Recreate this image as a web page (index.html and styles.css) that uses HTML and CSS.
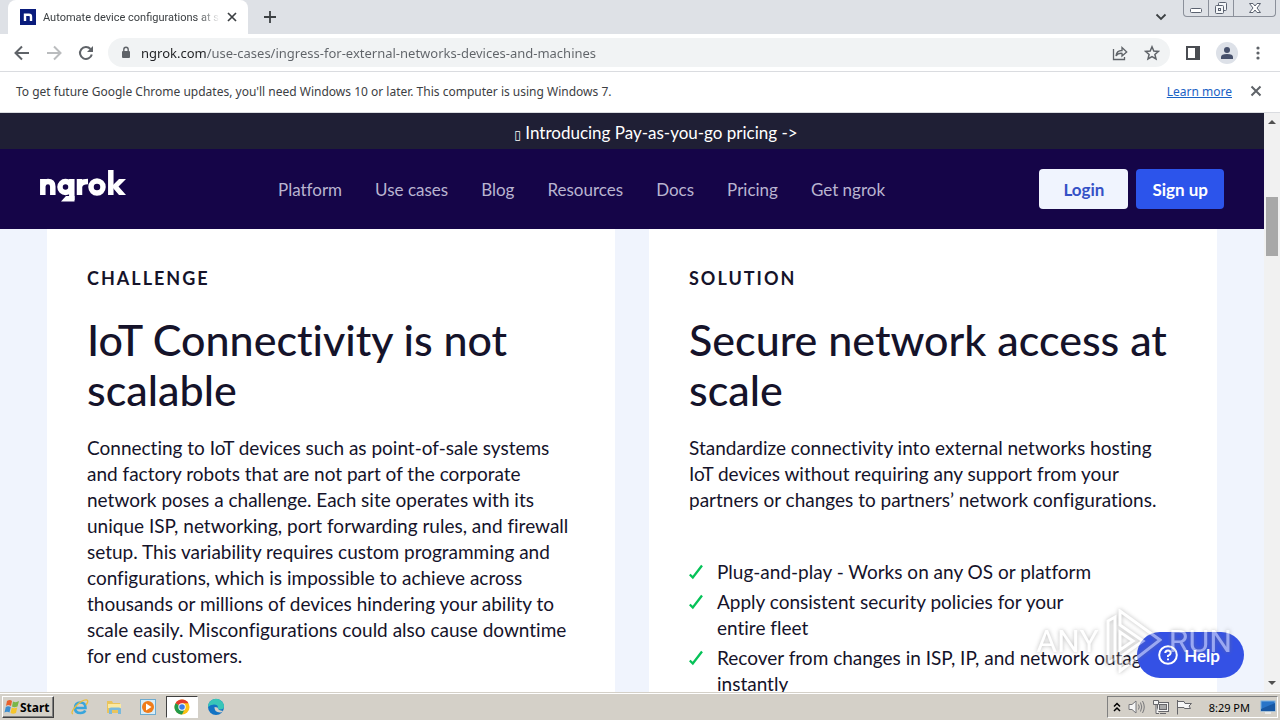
FILE: index.html
```
<!DOCTYPE html>
<html lang="en">
<head>
    <meta charset="UTF-8">
    <meta name="viewport" content="width=device-width, initial-scale=1.0">
    <title>Automate device configurations at scale</title>
    <link rel="stylesheet" href="styles.css">
</head>
<body>
    <!-- Browser tabs -->
    <div class="tab-strip">
        <div class="tab">
            <svg class="favicon" width="16" height="16" viewBox="0 0 16 16">
                <rect width="16" height="16" fill="#0a1c7c"/>
                <path d="M5 12V4.500M5 5.700H9Q11 5.700 11 7.700V12" fill="none" stroke="#fff" stroke-width="2.400"/>
            </svg>
            <span class="tab-title">Automate device configurations at scale</span>
            <button class="icon-button" aria-label="Close tab">
                <svg width="10" height="10" viewBox="0 0 10 10"><path d="M1 1L9 9M9 1L1 9" stroke="#3c4043" stroke-width="1.700"/></svg>
            </button>
        </div>
        <button class="icon-button new-tab" aria-label="New tab">
            <svg width="14" height="14" viewBox="0 0 14 14"><path d="M7 1V13M1 7H13" stroke="#3c4043" stroke-width="1.800"/></svg>
        </button>
        <button class="icon-button tab-search" aria-label="Search tabs">
            <svg width="12" height="8" viewBox="0 0 12 8"><path d="M1.500 1.500L6 6L10.500 1.500" fill="none" stroke="#3c4043" stroke-width="1.800"/></svg>
        </button>
        <div class="window-buttons">
            <button aria-label="Minimize">
                <svg width="14" height="14" viewBox="0 0 14 14"><rect x="1.500" y="7.500" width="11" height="4" rx="1" fill="#fff" stroke="#5b6270"/></svg>
            </button>
            <button aria-label="Restore">
                <svg width="14" height="14" viewBox="0 0 14 14" fill="#f4f6f8" stroke="#5b6270"><rect x="4.500" y="1.500" width="8" height="8" rx="1"/><rect x="1.500" y="4.500" width="8" height="8" rx="1"/><rect x="4.500" y="7.500" width="2" height="2"/></svg>
            </button>
            <button class="window-close" aria-label="Close">
                <svg width="14" height="14" viewBox="0 0 14 14"><path d="M1.500 2.500H5L7 5L9 2.500H12.500L9 7L12.500 11.500H9L7 9L5 11.500H1.500L5 7Z" fill="#fff" stroke="#5b6270"/></svg>
            </button>
        </div>
    </div>

    <!-- Address bar -->
    <div class="toolbar">
        <button class="icon-button" aria-label="Back">
            <svg width="16" height="16" viewBox="0 0 16 16" fill="none" stroke="#5f6368" stroke-width="2"><path d="M15 8H2M8 1.500L1.500 8L8 14.500"/></svg>
        </button>
        <button class="icon-button" aria-label="Forward">
            <svg width="16" height="16" viewBox="0 0 16 16" fill="none" stroke="#babcbe" stroke-width="2"><path d="M1 8H14M8 1.500L14.500 8L8 14.500"/></svg>
        </button>
        <button class="icon-button" aria-label="Reload">
            <svg width="16" height="16" viewBox="0 0 16 16"><path d="M13.800 9.500A6 6 0 1 1 12.500 4" fill="none" stroke="#5f6368" stroke-width="2"/><path d="M15 1V7H9Z" fill="#5f6368"/></svg>
        </button>
        <div class="omnibox">
            <svg width="10" height="13" viewBox="0 0 10 13"><rect x="1" y="5" width="8" height="7" rx="1" fill="#5f6368"/><path d="M2.800 5.500V3.500A2.200 2.200 0 0 1 7.200 3.500V5.500" fill="none" stroke="#5f6368" stroke-width="1.400"/></svg>
            <input class="url" type="text" aria-label="Address" value="ngrok.com/use-cases/ingress-for-external-networks-devices-and-machines">
            <button class="icon-button" aria-label="Share">
                <svg width="16" height="16" viewBox="0 0 16 16" fill="none" stroke="#5f6368" stroke-width="1.300"><path d="M1.500 4V14.500H12.500V12"/><path d="M4 11Q4.500 5.500 10 5.500V2.500L14.700 7L10 11V8.300Q6 8 4 11Z"/></svg>
            </button>
            <button class="icon-button" aria-label="Bookmark">
                <svg width="16" height="16" viewBox="0 0 16 16"><path d="M8 1.800L9.800 6L14.400 6.400L10.900 9.400L12 13.900L8 11.500L4 13.900L5.100 9.400L1.600 6.400L6.200 6Z" fill="none" stroke="#5f6368" stroke-width="1.500"/></svg>
            </button>
        </div>
        <button class="icon-button" aria-label="Side panel">
            <svg width="14" height="14" viewBox="0 0 14 14"><path d="M0 0H14V14H0ZM2 2V12H9V2Z" fill="#4a4d52" fill-rule="evenodd"/></svg>
        </button>
        <button class="icon-button" aria-label="Profile">
            <svg width="22" height="22" viewBox="0 0 22 22"><circle cx="11" cy="11" r="11" fill="#dde1e8"/><circle cx="11" cy="8" r="3" fill="#46506b"/><path d="M5 17V15Q5 12 11 12T17 15V17Z" fill="#46506b"/></svg>
        </button>
        <button class="icon-button menu" aria-label="Menu">
            <svg width="4" height="14" viewBox="0 0 4 14" fill="#5f6368"><circle cx="2" cy="2" r="1.600"/><circle cx="2" cy="7" r="1.600"/><circle cx="2" cy="12" r="1.600"/></svg>
        </button>
    </div>

    <div class="infobar">
        <span>To get future Google Chrome updates, you'll need Windows 10 or later. This computer is using Windows 7.</span>
        <a href="#">Learn more</a>
        <button class="icon-button" aria-label="Dismiss">
            <svg width="12" height="12" viewBox="0 0 12 12"><path d="M1.500 1.500L10.500 10.500M10.500 1.500L1.500 10.500" stroke="#5f6368" stroke-width="2"/></svg>
        </button>
    </div>

    <!-- Page -->
    <div class="viewport">
        <div class="page">
            <a class="banner" href="#"><span class="symbol">&#x25AF;</span> Introducing Pay-as-you-go pricing -&gt;</a>
            <header class="site-header">
                <a class="logo" href="#" aria-label="ngrok home">
                    <svg width="86" height="34" viewBox="0 0 86 34" fill="none" stroke="#fff" stroke-width="5.500">
                        <path d="M2.800 26V10M2.800 17Q3.500 12.500 8 12.500Q12.800 12.500 12.800 17.500V26"/>
                        <circle cx="25.500" cy="18" r="5.500"/>
                        <path d="M31.800 10V31"/>
                        <path d="M21 32.500L26 27H34.500V32.500Z" fill="#fff" stroke="none"/>
                        <path d="M39.500 26V10M39.500 18Q40 12.500 48 12.500"/>
                        <circle cx="57" cy="18" r="6"/>
                        <path d="M70.800 26V1"/>
                        <path d="M73 16L79 10H86L78.500 17.500L86 26H79L73 19Z" fill="#fff" stroke="none"/>
                    </svg>
                </a>
                <nav class="nav">
                    <a href="#">Platform</a>
                    <a href="#">Use cases</a>
                    <a href="#">Blog</a>
                    <a href="#">Resources</a>
                    <a href="#">Docs</a>
                    <a href="#">Pricing</a>
                    <a href="#">Get ngrok</a>
                </nav>
                <div class="actions">
                    <button class="login">Login</button>
                    <button class="signup">Sign up</button>
                </div>
            </header>
            <main class="cards">
                <section class="card">
                    <h3>CHALLENGE</h3>
                    <h2>IoT Connectivity is not<br>scalable</h2>
                    <p>Connecting to IoT devices such as point-of-sale systems<br>and factory robots that are not part of the corporate<br>network poses a challenge. Each site operates with its<br>unique ISP, networking, port forwarding rules, and firewall<br>setup. This variability requires custom programming and<br>configurations, which is impossible to achieve across<br>thousands or millions of devices hindering your ability to<br>scale easily. Misconfigurations could also cause downtime<br>for end customers.</p>
                </section>
                <section class="card">
                    <h3>SOLUTION</h3>
                    <h2>Secure network access at<br>scale</h2>
                    <p>Standardize connectivity into external networks hosting<br>IoT devices without requiring any support from your<br>partners or changes to partners’ network configurations.</p>
                    <ul class="checks">
                        <li><svg width="16" height="18" viewBox="0 0 16 18"><path d="M.8 11.500L3.800 14.500L13 2.500" fill="none" stroke="#06c258" stroke-width="2.300"/></svg>Plug-and-play - Works on any OS or platform</li>
                        <li><svg width="16" height="18" viewBox="0 0 16 18"><path d="M.8 11.500L3.800 14.500L13 2.500" fill="none" stroke="#06c258" stroke-width="2.300"/></svg>Apply consistent security policies for your<br>entire fleet</li>
                        <li><svg width="16" height="18" viewBox="0 0 16 18"><path d="M.8 11.500L3.800 14.500L13 2.500" fill="none" stroke="#06c258" stroke-width="2.300"/></svg>Recover from changes in ISP, IP, and network outages<br>instantly</li>
                    </ul>
                </section>
            </main>
            <button class="help">
                <svg width="20" height="20" viewBox="0 0 20 20" fill="none" stroke="#fff" stroke-width="2"><circle cx="10" cy="10" r="8.800"/><path d="M7.300 8Q7.300 5.500 10 5.500T12.700 8Q12.700 9.500 10 10.800V12M10 13.500V15.300"/></svg>
                Help
            </button>
        </div>
        <div class="scrollbar">
            <svg width="8" height="5" viewBox="0 0 8 5"><path d="M0 5L4 1L8 5Z" fill="#505050"/></svg>
            <div class="track"><div class="thumb"></div></div>
            <svg width="8" height="5" viewBox="0 0 8 5"><path d="M0 0L4 4L8 0Z" fill="#505050"/></svg>
        </div>
        <div class="watermark">
            <span>ANY</span>
            <svg width="56" height="64" viewBox="0 0 56 64" fill="none" stroke="#fff" stroke-width="3"><path d="M2 12L9 8V50L2 54Z"/><path d="M14 2L54 31L14 62V48L37 32L14 16Z"/><path d="M14 23L27 32L14 41Z"/></svg>
            <span>RUN</span>
        </div>
    </div>

    <!-- Windows taskbar -->
    <div class="taskbar">
        <button class="start">
            <svg width="16" height="16" viewBox="0 0 16 16"><path d="M3 2Q6 0 8 2L7 7Q4 5 2 7Z" fill="#e8602c"/><path d="M9 2.500Q12 4 15 2L13.500 7.500Q10 9 8 7.500Z" fill="#7ab648"/><path d="M1.800 8Q4 6.500 6.800 8L5.500 13.500Q3 12 .5 13.500Z" fill="#3c8ed0"/><path d="M7.800 8.500Q10 10 13.200 8.500L12 14Q9 15.500 6.500 14Z" fill="#f6c52c"/></svg>
            Start
        </button>
        <div class="quick-launch">
            <button aria-label="Internet Explorer">
                <svg width="18" height="18" viewBox="0 0 18 18" fill="none"><path d="M4 10H14.500Q14.500 4.500 9.500 4.500Q4 4.500 4 10Q4 15 9.500 15Q13 15 14.300 12.500" stroke="#38a5dc" stroke-width="2.600"/><path d="M2 16Q-1 15 5 8Q12 1 16 2Q18 3 15 7" stroke="#e9bd3c" stroke-width="1.300"/></svg>
            </button>
            <button aria-label="Explorer">
                <svg width="18" height="18" viewBox="0 0 18 18"><path d="M2 3H7L8 5H15V15H2Z" fill="#e9c45c"/><path d="M3 6H16V10H3Z" fill="#fbe9a0"/><path d="M4 16V11Q4 9.500 6 9.500H14Q16 9.500 16 11V16H13V12H7V16Z" fill="#79b9dc"/></svg>
            </button>
            <button aria-label="Media Player">
                <svg width="18" height="18" viewBox="0 0 18 18"><rect x="1.500" y="1.500" width="15" height="15" fill="#d8edf8" stroke="#6cabd0"/><circle cx="9" cy="9" r="6" fill="#f07c1a"/><path d="M7 5.500L12.500 9L7 12.500Z" fill="#fff"/></svg>
            </button>
            <button class="active" aria-label="Chrome">
                <svg width="16" height="16" viewBox="0 0 16 16"><circle cx="8" cy="8" r="7.500" fill="#fbc116"/><path d="M8 8L1.500 4.250A7.500 7.500 0 0 1 14.500 4.250H8Z" fill="#e33b2e"/><path d="M8 8L1.500 4.250A7.500 7.500 0 0 0 8 15.500L11 9.500Z" fill="#229a4b"/><circle cx="8" cy="8" r="3.700" fill="#fff"/><circle cx="8" cy="8" r="2.800" fill="#3a7de8"/></svg>
            </button>
            <button aria-label="Edge">
                <svg width="18" height="18" viewBox="0 0 18 18"><circle cx="9" cy="9" r="8" fill="#1273c4"/><path d="M1 9A8 8 0 0 1 17 8.500Q17 11.500 13 11.500Q10.500 11.500 11 9.500Q11 6.500 7 6.500Q3 6.500 1 9Z" fill="#38c6b8"/><path d="M7.500 9Q7 14 13 14.500Q15 14.500 16 13Q11 12.500 10.500 9.500Z" fill="#d4d0c8"/></svg>
            </button>
        </div>
        <div class="tray">
            <svg width="8" height="10" viewBox="0 0 8 10" fill="none" stroke="#000" stroke-width="1.500"><path d="M1 4.500L4 1.500L7 4.500M1 9L4 6L7 9"/></svg>
            <svg width="18" height="16" viewBox="0 0 18 16" fill="none" stroke="#77777a"><path d="M1 5.500H4L8 2V14L4 10.500H1Z" fill="#f5f5f5"/><path d="M10.500 5.500Q12 8 10.500 10.500M12.500 3.500Q15 8 12.500 12.500M14.500 2Q18 8 14.500 14"/></svg>
            <svg width="16" height="16" viewBox="0 0 16 16" fill="#f5f5f5" stroke="#66666a"><rect x="4.500" y="3.500" width="11" height="9"/><rect x="6.500" y="5.500" width="7" height="5" fill="#a9a9aa"/><path d="M7 14.500H13M.5 1.500H5.500V5.500H.5ZM3 6V14.500H6"/></svg>
            <svg width="17" height="16" viewBox="0 0 17 16"><path d="M1.500 1V15.500M2 2.500H8L9 4.500H15.500L13 7L14.500 9.500H8.500L8 8.500H2" fill="#f7f7f7" stroke="#66666a"/></svg>
            <span class="clock">8:29 PM</span>
            <svg width="16" height="14" viewBox="0 0 16 14"><rect x="1" y="1" width="14" height="10" fill="#2874c8" stroke="#7ab0e0"/><path d="M1 9L15 3V11H1Z" fill="#1858a4"/><path d="M5 13H11" stroke="#e8e8e8" stroke-width="2"/></svg>
        </div>
    </div>
</body>
</html>
```
FILE: styles.css
```
* {
    box-sizing: border-box;
}
body {
    margin: 0;
    height: 100vh;
    display: flex;
    flex-direction: column;
    overflow: hidden;
    font-family: "DejaVu Sans", sans-serif;
    font-size: 12px;
    background-color: #fff;
}
button {
    font-family: inherit;
    padding: 0;
    border: none;
    background: none;
    cursor: pointer;
}
svg {
    flex-shrink: 0;
}
.icon-button {
    display: flex;
    align-items: center;
    justify-content: center;
}

/* Tabs */
.tab-strip {
    display: flex;
    height: 34px;
    padding-left: 8px;
    background-color: #dee1e6;
}
.tab {
    display: flex;
    align-items: center;
    gap: 7px;
    width: 240px;
    padding: 0 11px 0 12px;
    background-color: #fff;
    border-radius: 8px 8px 0 0;
}
.tab-title {
    flex: 1;
    overflow: hidden;
    white-space: nowrap;
    font-family: Roboto, sans-serif;
    font-size: 11px;
    color: #3c4043;
    mask-image: linear-gradient(to right, #000 88%, transparent);
}
.new-tab {
    width: 44px;
}
.tab-search {
    width: 28px;
    margin-left: auto;
}
.window-buttons {
    display: flex;
    height: 17px;
    margin: 0 4px 0 8px;
    border: 1px solid #8b909a;
    border-top: none;
    border-radius: 0 0 4px 4px;
}
.window-buttons button {
    display: flex;
    align-items: center;
    justify-content: center;
    width: 25px;
    border-right: 1px solid #8b909a;
}
.window-buttons .window-close {
    width: 41px;
    border-right: none;
}

/* Toolbar */
.toolbar {
    display: flex;
    align-items: center;
    gap: 16px;
    height: 38px;
    padding: 0 20px 0 14px;
    border-bottom: 1px solid #dadce0;
}
.omnibox {
    display: flex;
    align-items: center;
    gap: 16px;
    flex: 1;
    height: 29px;
    margin-left: -2px;
    padding: 0 10px 0 13px;
    background-color: #f1f3f4;
    border-radius: 15px;
}
.url {
    flex: 1;
    min-width: 0;
    margin-left: -6px;
    padding: 0;
    border: none;
    outline: none;
    font-family: "Noto Sans", sans-serif;
    font-size: 13px;
    background: linear-gradient(to right, #202124 65px, #5f6368 65px);
    background-clip: text;
    -webkit-text-fill-color: transparent;
}
.toolbar .icon-button + .icon-button + .menu {
    margin-left: 2px;
}

.infobar {
    display: flex;
    align-items: center;
    height: 41px;
    padding: 0 18px 2px 16px;
    border-bottom: 1px solid #dadce0;
    font-family: "Noto Sans", sans-serif;
    color: #3c4043;
}
.infobar a {
    margin: 0 18px 0 auto;
    color: #1a62c5;
}

/* Page */
.viewport {
    position: relative;
    display: flex;
    flex: 1;
    min-height: 0;
}
.page {
    flex: 1;
    min-width: 0;
    overflow: hidden;
    font-family: Lato, sans-serif;
    font-variant-ligatures: none;
    color: #15132a;
    background-color: #f0f4fd;
}
.banner {
    display: block;
    height: 36px;
    padding-left: 48px;
    line-height: 40px;
    font-size: 17px;
    text-align: center;
    text-decoration: none;
    color: #fff;
    background-color: #1f1f35;
}
.banner .symbol {
    font-family: "DejaVu Sans", sans-serif;
    font-size: 12px;
}
.site-header {
    display: flex;
    align-items: center;
    height: 80px;
    padding: 0 40px;
    background-color: #150548;
}
.logo {
    display: flex;
    width: 238px;
    padding-bottom: 6px;
}
.nav {
    display: flex;
    gap: 33px;
}
.nav a {
    font-size: 17px;
    text-decoration: none;
    color: #b9b4d0;
}
.actions {
    display: flex;
    gap: 8px;
    margin-left: auto;
}
.actions button {
    height: 40px;
    border-radius: 4px;
    font-size: 17px;
    font-weight: bold;
}
.actions .login {
    padding: 0 24px;
    color: #3451c6;
    background-color: #f0f4fe;
}
.actions .signup {
    padding: 0 16px;
    color: #fff;
    background-color: #2c54eb;
}
.cards {
    display: flex;
    gap: 34px;
    padding: 0 47px;
}
.card {
    flex: 1;
    min-height: 500px;
    padding: 36px 40px;
    background-color: #fff;
    white-space: nowrap;
}
.card h3 {
    margin: 0;
    font-size: 18px;
    line-height: 26px;
    letter-spacing: 2px;
}
.card h2 {
    margin: 24px 0 20px;
    font-size: 43px;
    line-height: 50px;
    font-weight: 500;
}
.card p {
    margin: 0;
    font-size: 19px;
    line-height: 26px;
}
.checks {
    margin: 46px 0 0;
    padding: 0;
    list-style: none;
    font-size: 19px;
    line-height: 26px;
}
.checks li {
    display: flex;
    gap: 12px;
    margin-bottom: 4px;
}
.checks svg {
    margin-top: 4px;
}
.help {
    position: absolute;
    right: 36px;
    bottom: 14px;
    display: flex;
    align-items: center;
    gap: 6px;
    height: 46px;
    padding: 0 24px 0 21px;
    border-radius: 23px;
    font-size: 17px;
    font-weight: bold;
    color: #fff;
    background-color: #3451e5;
}
.scrollbar {
    display: flex;
    flex-direction: column;
    align-items: center;
    width: 16px;
    padding: 6px 0;
    background-color: #f1f1f1;
}
.track {
    flex: 1;
    width: 12px;
    padding-top: 73px;
}
.thumb {
    height: 59px;
    background-color: #a8a8a8;
}
.watermark {
    position: absolute;
    right: 48px;
    bottom: 19px;
    display: flex;
    align-items: center;
    gap: 7px;
    font-family: "Liberation Sans Narrow", Roboto, sans-serif;
    font-size: 32px;
    color: #fff;
    opacity: 0.5;
    filter: drop-shadow(0 0 2px #777);
    pointer-events: none;
}

/* Taskbar */
.taskbar {
    display: flex;
    align-items: center;
    height: 28px;
    padding: 1px 2px 0;
    border-top: 1px solid #d4d0c8;
    box-shadow: inset 0 1px #fff;
    background-color: #d4d0c8;
}
.start {
    display: flex;
    align-items: center;
    height: 22px;
    padding: 0 3px 0 1px;
    border: 1px solid;
    border-color: #fff #404040 #404040 #fff;
    box-shadow: inset -1px -1px #808080;
    font-family: "Noto Sans", sans-serif;
    font-size: 12px;
    font-weight: bold;
}
.quick-launch {
    display: flex;
    gap: 2px;
    margin-left: 10px;
}
.quick-launch button {
    display: flex;
    align-items: center;
    justify-content: center;
    width: 32px;
    height: 22px;
}
.quick-launch .active {
    border: 1px solid;
    border-color: #404040 #fff #fff #404040;
    background-color: #fff;
}
.tray {
    display: flex;
    align-items: center;
    gap: 7px;
    height: 22px;
    margin-left: auto;
    padding: 0 1px 0 5px;
    border: 1px solid;
    border-color: #808080 #fff #fff #808080;
}
.clock {
    margin: 0 3px 0 9px;
    font-family: "Noto Sans", sans-serif;
    font-size: 11px;
}
```
